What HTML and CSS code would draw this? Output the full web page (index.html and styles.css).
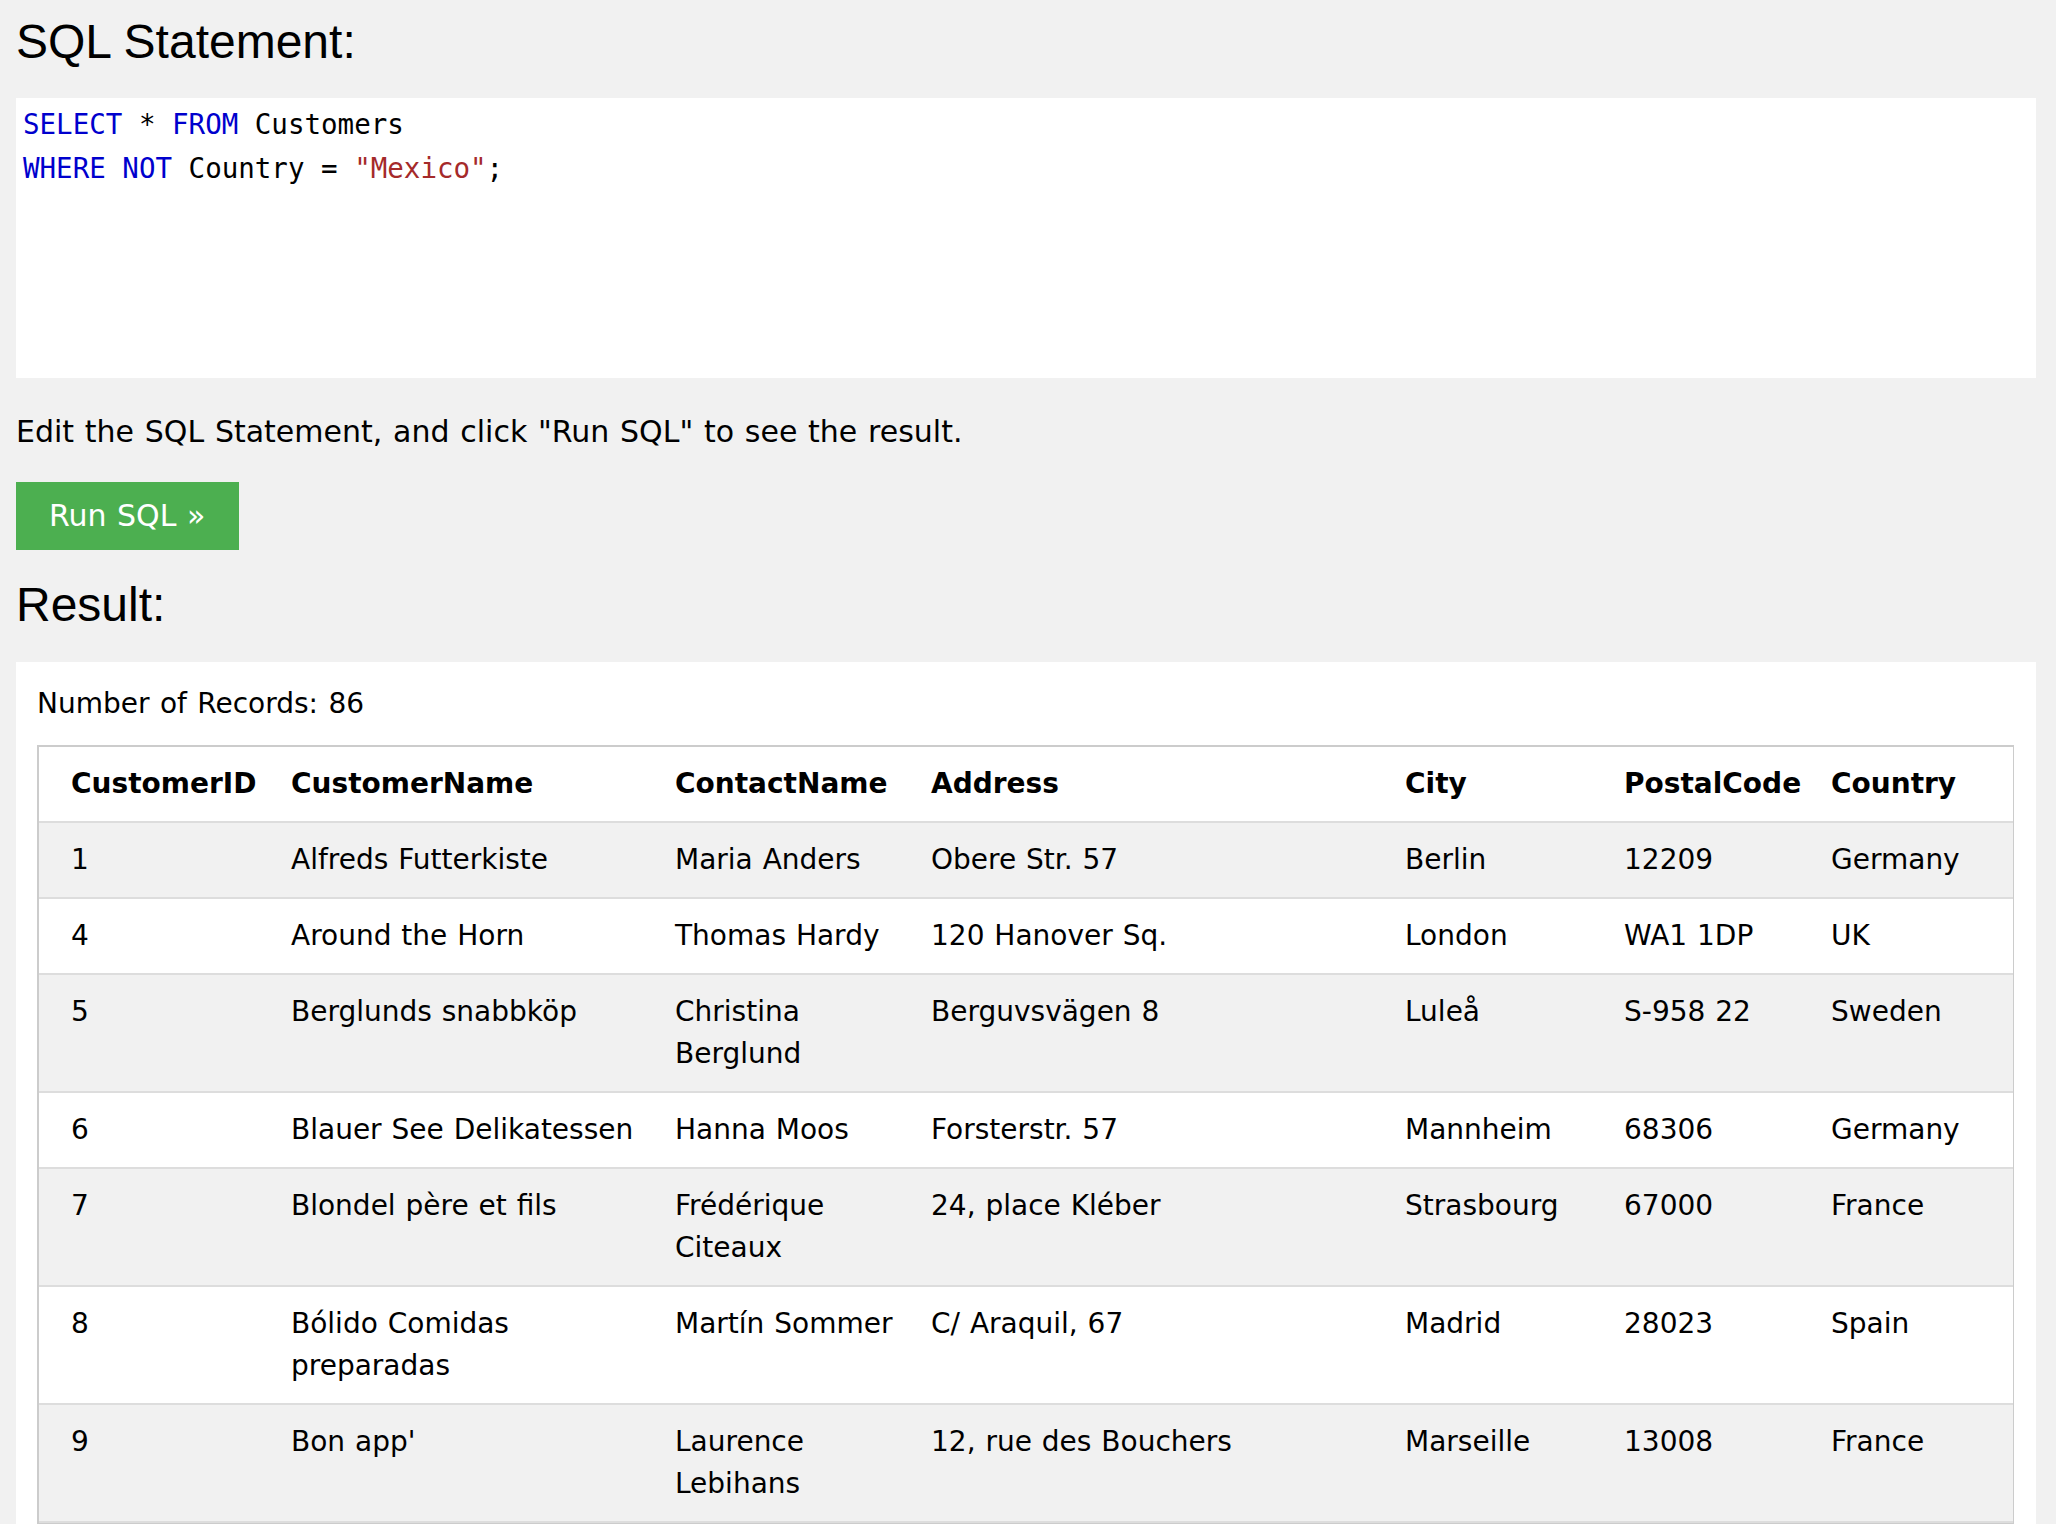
FILE: index.html
```html
<!DOCTYPE html>
<html lang="en">
<head>
<meta charset="utf-8">
<title>SQL Tryit</title>
<link rel="stylesheet" href="styles.css">
</head>
<body>
<h2 class="title title-first">SQL Statement:</h2>
<pre class="code"><span class="kw">SELECT</span> * <span class="kw">FROM</span> Customers
<span class="kw">WHERE</span> <span class="kw">NOT</span> Country = <span class="str">"Mexico"</span>;</pre>
<p class="hint">Edit the SQL Statement, and click "Run SQL" to see the result.</p>
<div class="actions"><button class="run">Run SQL »</button></div>
<h2 class="title title-result">Result:</h2>
<div class="panel">
  <div class="count">Number of Records: 86</div>
  <div class="tablewrap">
    <table class="records">
      <colgroup>
        <col class="c1"><col class="c2"><col class="c3"><col class="c4"><col class="c5"><col class="c6"><col class="c7">
      </colgroup>
      <tr><th>CustomerID</th><th>CustomerName</th><th>ContactName</th><th>Address</th><th>City</th><th>PostalCode</th><th>Country</th></tr>
      <tr><td>1</td><td>Alfreds Futterkiste</td><td>Maria Anders</td><td>Obere Str. 57</td><td>Berlin</td><td>12209</td><td>Germany</td></tr>
      <tr><td>4</td><td>Around the Horn</td><td>Thomas Hardy</td><td>120 Hanover Sq.</td><td>London</td><td>WA1 1DP</td><td>UK</td></tr>
      <tr><td>5</td><td>Berglunds snabbköp</td><td>Christina Berglund</td><td>Berguvsvägen 8</td><td>Luleå</td><td>S-958 22</td><td>Sweden</td></tr>
      <tr><td>6</td><td>Blauer See Delikatessen</td><td>Hanna Moos</td><td>Forsterstr. 57</td><td>Mannheim</td><td>68306</td><td>Germany</td></tr>
      <tr><td>7</td><td>Blondel père et fils</td><td>Frédérique Citeaux</td><td>24, place Kléber</td><td>Strasbourg</td><td>67000</td><td>France</td></tr>
      <tr><td>8</td><td>Bólido Comidas preparadas</td><td>Martín Sommer</td><td>C/ Araquil, 67</td><td>Madrid</td><td>28023</td><td>Spain</td></tr>
      <tr><td>9</td><td>Bon app'</td><td>Laurence Lebihans</td><td>12, rue des Bouchers</td><td>Marseille</td><td>13008</td><td>France</td></tr>
    </table>
  </div>
</div>
</body>
</html>
```
FILE: styles.css
```css
html, body {
  margin: 0;
  background: #f1f1f1;
}
body {
  padding: 0 20px 0 16px;
  color: #000;
  font-family: "DejaVu Sans", Verdana, sans-serif;
}
.title {
  font-family: "Liberation Sans", Arial, Helvetica, sans-serif;
  font-weight: normal;
  font-size: 48px;
  line-height: 56px;
  margin: 0;
}
.title-first {
  margin-top: 14px;
}
.title-result {
  margin-top: 27px;
}
.code {
  box-sizing: border-box;
  margin: 28px 0 0 0;
  height: 280px;
  background: #fff;
  padding: 4px 7px;
  font-family: "DejaVu Sans Mono", "Liberation Mono", monospace;
  font-size: 27.5px;
  line-height: 44px;
  color: #000;
  white-space: pre;
  overflow: hidden;
}
.kw {
  color: #0000cd;
}
.str {
  color: #a52a2a;
}
.hint {
  margin: 31px 0 0 0;
  font-size: 30px;
  line-height: 45px;
  word-spacing: 1.2px;
}
.actions {
  margin-top: 28px;
  display: flex;
}
.run {
  border: none;
  background: #4caf50;
  color: #fff;
  font-family: "DejaVu Sans", Verdana, sans-serif;
  font-size: 30px;
  line-height: 36px;
  padding: 16px 34px 16px 33px;
  margin: 0;
  word-spacing: 1px;
}
.panel {
  margin-top: 29px;
  background: #fff;
  padding: 21px 22px 12px 21px;
}
.count {
  font-size: 28px;
  line-height: 42px;
  margin-bottom: 20px;
  word-spacing: 1.5px;
}
.tablewrap {
  border: 2px solid #ccc;
}
.records {
  width: 100%;
  table-layout: fixed;
  border-collapse: collapse;
  border-spacing: 0;
  font-size: 28px;
  line-height: 42px;
  word-spacing: 1px;
}
.c1 { width: 236px; }
.c2 { width: 384px; }
.c3 { width: 256px; }
.c4 { width: 474px; }
.c5 { width: 219px; }
.c6 { width: 207px; }
.c7 { width: 198px; }
.records tr {
  border-bottom: 2px solid #ddd;
}
.records tr:nth-child(odd) {
  background: #fff;
}
.records tr:nth-child(even) {
  background: #f1f1f1;
}
.records th,
.records td {
  padding: 16px;
  text-align: left;
  vertical-align: top;
}
.records th {
  font-weight: bold;
}
.records th:first-child,
.records td:first-child {
  padding-left: 32px;
}
```
